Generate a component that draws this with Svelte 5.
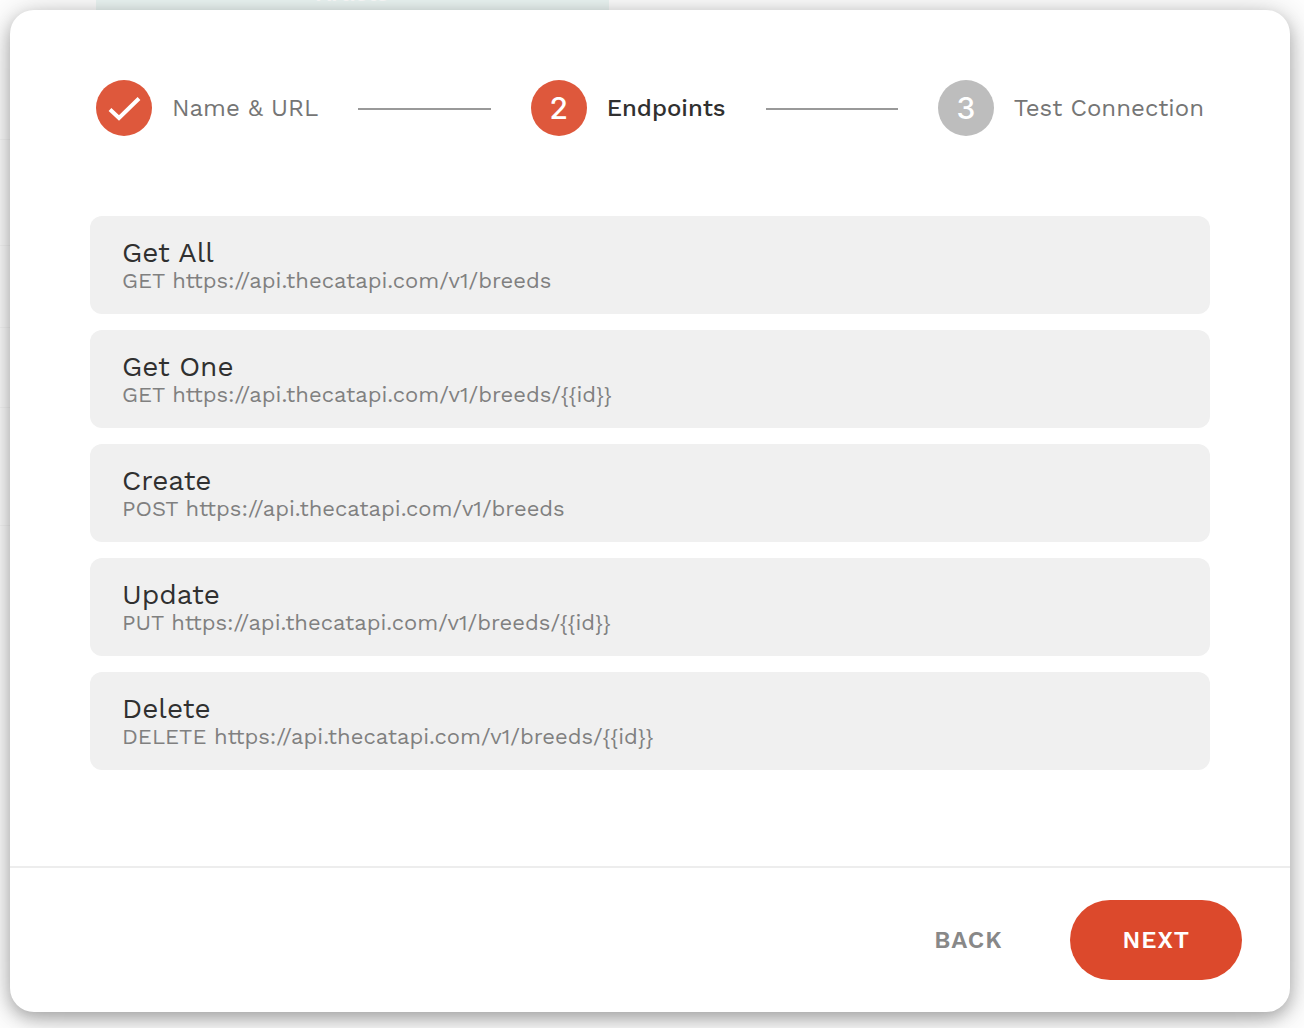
<script>
  const steps = [
    { label: 'Name & URL', state: 'done' },
    { label: 'Endpoints', state: 'current' },
    { label: 'Test Connection', state: 'upcoming' },
  ];

  const base = 'https://api.thecatapi.com/v1/breeds';
  const endpoints = [
    { name: 'Get All', method: 'GET', url: base },
    { name: 'Get One', method: 'GET', url: base + '/{{id}}' },
    { name: 'Create', method: 'POST', url: base },
    { name: 'Update', method: 'PUT', url: base + '/{{id}}' },
    { name: 'Delete', method: 'DELETE', url: base + '/{{id}}' },
  ];
</script>

<div class="page">
  <div class="sidebar" aria-hidden="true">
    <div></div>
    <div></div>
    <div></div>
    <div></div>
    <div></div>
  </div>
  <div class="banner">Artists</div>
  <div class="dialog" role="dialog" aria-label="Endpoints">
    <div class="content">
      <ol class="stepper">
        {#each steps as step, i}
          {#if i > 0}
            <li class="connector" aria-hidden="true"></li>
          {/if}
          <li class="step {step.state}" aria-current={step.state === 'current' ? 'step' : undefined}>
            <span class="badge">
              {#if step.state === 'done'}
                <svg viewBox="0 0 56 56" aria-hidden="true">
                  <path d="M14 29.500 L23 38 L43 18.500" />
                </svg>
              {:else}
                {i + 1}
              {/if}
            </span>
            <span class="label">{step.label}</span>
          </li>
        {/each}
      </ol>

      <ul class="endpoints">
        {#each endpoints as endpoint}
          <li class="endpoint">
            <div class="name">{endpoint.name}</div>
            <div class="url">{endpoint.method} {endpoint.url}</div>
          </li>
        {/each}
      </ul>
    </div>

    <footer class="actions">
      <button type="button" class="back">BACK</button>
      <button type="button" class="next">NEXT</button>
    </footer>
  </div>
</div>

<style>
  :global(body) {
    font-family: 'Work Sans', Inter, 'Liberation Sans', sans-serif;
    background: #fff;
  }

  .page {
    position: relative;
    box-sizing: border-box;
    min-height: 100vh;
    padding: 10px 14px 16px 10px;
    overflow: hidden;
  }

  .sidebar {
    position: absolute;
    top: 0;
    left: 0;
    display: grid;
    grid-template-rows: 140px 106px 82px 80px 118px;
    width: 72px;
  }

  .sidebar div {
    border-bottom: 1px solid #f8f8f8;
  }

  .banner {
    position: absolute;
    top: -22px;
    left: 96px;
    width: 513px;
    height: 40px;
    line-height: 32px;
    background: #eef8f6;
    color: #fff;
    font-size: 22px;
    font-weight: 600;
    text-align: center;
  }

  .dialog {
    position: relative;
    display: flex;
    flex-direction: column;
    min-height: calc(100vh - 26px);
    border-radius: 24px;
    background: #fff;
    box-shadow:
      0 6px 16px rgba(0, 0, 0, 0.26),
      0 4px 40px rgba(0, 0, 0, 0.2);
  }

  .content {
    flex: 1;
    padding: 70px 80px 96px;
  }

  ol,
  ul {
    margin: 0;
    padding: 0;
    list-style: none;
  }

  .stepper {
    display: flex;
    align-items: center;
    padding: 0 6px;
  }

  .step {
    display: flex;
    align-items: center;
    gap: 20px;
    color: #757575;
    font-size: 24px;
    line-height: 28px;
    white-space: nowrap;
  }

  .badge {
    display: flex;
    align-items: center;
    justify-content: center;
    width: 56px;
    height: 56px;
    border-radius: 50%;
    background: #de583c;
    color: #fff;
    font-family: Inter, 'Liberation Sans', sans-serif;
    font-size: 30px;
    font-weight: 500;
    line-height: 58px;
  }

  .badge svg {
    width: 56px;
    height: 56px;
    fill: none;
    stroke: #fff;
    stroke-width: 4;
  }

  .upcoming .badge {
    background: #bdbdbd;
  }

  .current .label {
    color: #303030;
    font-weight: 500;
  }

  .connector {
    flex: 1;
    height: 2px;
    margin: 2px 40px 0;
    background: #999;
  }

  .endpoints {
    display: flex;
    flex-direction: column;
    gap: 16px;
    margin-top: 80px;
  }

  .endpoint {
    padding: 23px 32px 19px;
    border-radius: 12px;
    background: #f0f0f0;
  }

  .name {
    color: #303030;
    font-size: 28px;
    line-height: 28px;
  }

  .url {
    color: #808080;
    font-size: 22px;
    line-height: 28px;
  }

  .actions {
    display: flex;
    align-items: center;
    justify-content: flex-end;
    gap: 16px;
    padding: 32px 48px;
    border-top: 2px solid #ededed;
  }

  button {
    height: 80px;
    padding: 0 52px;
    border: 0;
    border-radius: 40px;
    background: transparent;
    color: #888;
    font-family: inherit;
    font-size: 24px;
    font-weight: 600;
    letter-spacing: 1px;
  }

  .next {
    background: #dc492c;
    color: #fff;
  }
</style>
